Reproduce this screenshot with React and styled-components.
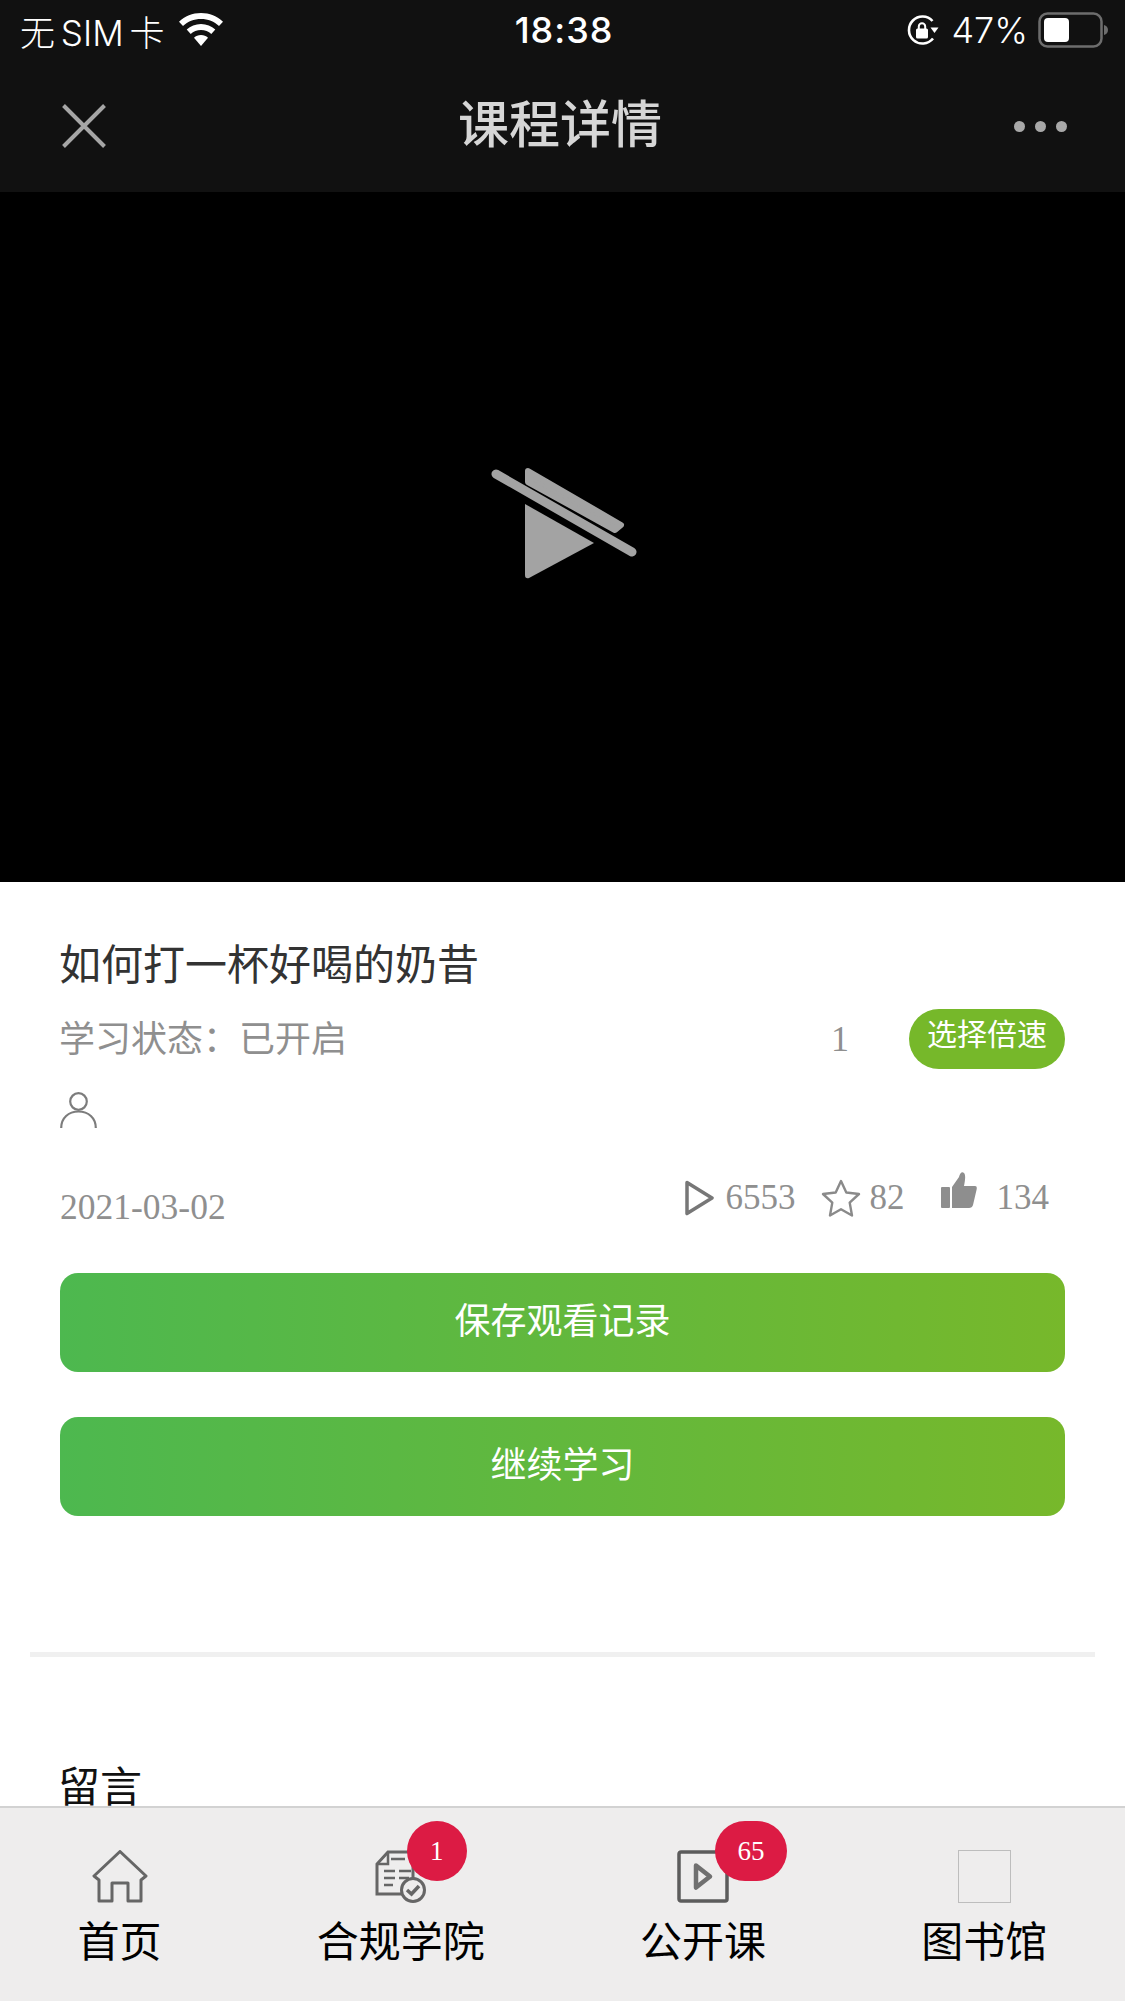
import React from 'react';
import styled, { createGlobalStyle } from 'styled-components';

const cjk = '"Noto Sans CJK SC", "Noto Sans", sans-serif';
const serif = '"Liberation Serif", "Noto Sans CJK SC", serif';

const GlobalStyle = createGlobalStyle`
  html, body {
    margin: 0;
    padding: 0;
    background: #fff;
  }
  * {
    box-sizing: border-box;
  }
`;

const Page = styled.div`
  display: flex;
  flex-direction: column;
  width: 1125px;
  height: 2001px;
  overflow: hidden;
  font-family: ${cjk};
`;

const Header = styled.header`
  flex: none;
  height: 192px;
  background: #111111;
  display: flex;
  flex-direction: column;
`;

const StatusBar = styled.div`
  height: 60px;
  padding: 0 17px 0 20px;
  display: grid;
  grid-template-columns: 1fr auto 1fr;
  align-items: center;
  color: #fff;
`;

const StatusLeft = styled.div`
  display: flex;
  align-items: center;
  gap: 13px;
  font-size: 35px;
  font-weight: 300;
  word-spacing: -4px;
  font-family: "Inter", ${cjk};
`;

const Time = styled.div`
  font-family: "Inter", sans-serif;
  font-size: 36px;
  font-weight: 500;
  letter-spacing: 1px;
`;

const StatusRight = styled.div`
  display: flex;
  align-items: center;
  justify-content: flex-end;
  gap: 10px;
  font-family: "Inter", sans-serif;
  font-size: 36px;
  font-weight: 300;
`;

const BatteryLevel = styled.span`
  margin-left: 2px;
`;

const NavBar = styled.div`
  flex: 1;
  display: flex;
  align-items: center;
  justify-content: space-between;
  padding: 0 58px 0 62px;
`;

const NavTitle = styled.div`
  font-size: 51px;
  font-weight: 500;
  color: #d6d6d6;
  line-height: 1;
  margin-bottom: 10px;
`;

const Dots = styled.div`
  display: flex;
  gap: 10px;
`;

const Dot = styled.span`
  width: 11px;
  height: 11px;
  border-radius: 50%;
  background: #a8a8a8;
`;

const VideoArea = styled.div`
  flex: none;
  height: 690px;
  background: #000;
  display: flex;
  align-items: center;
  justify-content: center;
`;

const Scroller = styled.main`
  flex: 1;
  min-height: 0;
  overflow: hidden;
  background: #fff;
`;

const Info = styled.section`
  padding: 55px 60px 0;
`;

const Title = styled.h1`
  margin: 0 0 0 -1px;
  font-size: 42px;
  font-weight: 400;
  line-height: 50px;
  color: #333;
`;

const StatusRow = styled.div`
  display: flex;
  align-items: center;
  justify-content: space-between;
  margin-top: 22px;
  height: 60px;
`;

const Muted = styled.div`
  font-size: 36px;
  color: #8f8f8f;
  line-height: 40px;
  white-space: pre;
  margin: 0 0 7px -1px;
`;

const SpeedGroup = styled.div`
  display: flex;
  align-items: center;
  gap: 60px;
`;

const SpeedValue = styled.span`
  font-family: ${serif};
  font-size: 36px;
  color: #8f8f8f;
`;

const SpeedPill = styled.button`
  width: 156px;
  height: 60px;
  border: 0;
  border-radius: 30px;
  padding: 0 0 14px;
  background: #76b82a;
  color: #fff;
  font-family: ${cjk};
  font-size: 30px;
  line-height: 1;
`;

const Author = styled.div`
  margin-top: 23px;
  height: 36px;
  display: flex;
`;

const MetaRow = styled.div`
  display: flex;
  align-items: flex-start;
  justify-content: space-between;
  margin-top: 44px;
  height: 101px;
`;

const DateText = styled.div`
  font-family: ${serif};
  font-size: 35.500px;
  line-height: 40px;
  color: #8f8f8f;
  margin-top: 15px;
`;

const Stats = styled.div`
  display: flex;
  align-items: center;
  height: 48px;
  margin: 2px 16px 0 0;
`;

const Stat = styled.div`
  display: flex;
  align-items: center;
  gap: ${p => p.$gap}px;
  margin-left: ${p => p.$left}px;
  font-family: ${serif};
  font-size: 35px;
  color: #8f8f8f;
`;

const RaisedIcon = styled.span`
  display: flex;
  margin-bottom: 16px;
`;

const ActionButton = styled.button`
  display: block;
  width: 100%;
  height: 99px;
  margin-bottom: 45px;
  border: 0;
  border-radius: 18px;
  background: linear-gradient(90deg, #4db84f 0%, #77b82b 100%);
  color: #fff;
  font-family: ${cjk};
  font-size: 36px;
  padding: 0 0 10px;
`;

const Divider = styled.hr`
  height: 5px;
  margin: 136px 30px 0;
  border: 0;
  background: #f0f0f0;
`;

const CommentTitle = styled.h2`
  margin: 102px 0 0 58px;
  font-size: 42px;
  font-weight: 400;
  line-height: 50px;
  color: #111;
`;

const TabBar = styled.nav`
  flex: none;
  height: 195px;
  background: #eeeded;
  border-top: 2px solid #d2d2d2;
  display: flex;
  justify-content: space-around;
  padding-top: 42px;
`;

const Tab = styled.div`
  display: flex;
  flex-direction: column;
  align-items: center;
`;

const TabIcon = styled.div`
  position: relative;
  height: 53px;
  display: flex;
  align-items: center;
  justify-content: center;
`;

const Badge = styled.span`
  position: absolute;
  top: -29px;
  left: ${p => p.$left}px;
  width: ${p => p.$width}px;
  height: 60px;
  border-radius: 30px;
  background: #dc1b44;
  color: #fff;
  font-family: ${serif};
  font-size: 27px;
  display: flex;
  align-items: center;
  justify-content: center;
`;

const TabLabel = styled.span`
  margin-top: 8px;
  font-size: 42px;
  line-height: 56px;
  color: #000;
`;

const BlankIcon = styled.div`
  width: 53px;
  height: 53px;
  border: 1px solid #bdbdbd;
`;

const WifiIcon = () => (
  <svg width="46" height="34" viewBox="0 0 46 34" fill="#fff">
    <path d="M23 0C14.500 0 6.800 3.300 1 8.700L5 13C9.700 8.600 16 6 23 6s13.300 2.600 18 7l4-4.300C39.200 3.300 31.500 0 23 0z" />
    <path d="M23 11c-5.500 0-10.500 2.100-14.300 5.600l4 4.300C15.400 18.500 19 17 23 17s7.600 1.500 10.300 3.900l4-4.300C33.500 13.100 28.500 11 23 11z" />
    <path d="M23 22c-2.700 0-5.200 1-7 2.700L23 33l7-8.300C28.200 23 25.700 22 23 22z" />
  </svg>
);

const RotationLockIcon = () => (
  <svg width="33" height="33" viewBox="0 0 33 33" fill="none">
    <path d="M27 24.500A13.500 13.500 0 1 1 26.500 7" stroke="#fff" strokeWidth="2.600" />
    <path d="M24.500 13.500h8L28.500 19z" fill="#fff" />
    <rect x="10" y="14.500" width="12" height="10" rx="1.500" fill="#fff" />
    <path d="M12.800 15v-2.500a3.200 3.200 0 0 1 6.400 0V15" stroke="#fff" strokeWidth="2" />
  </svg>
);

const BatteryIcon = () => (
  <svg width="70" height="36" viewBox="0 0 70 36">
    <rect x="1.500" y="1.500" width="62" height="33" rx="8" fill="none" stroke="#6d6d6d" strokeWidth="2.500" />
    <rect x="6" y="6" width="25" height="24" rx="4" fill="#fff" />
    <path d="M66 13c2.500.5 4 2.500 4 5s-1.500 4.500-4 5z" fill="#6d6d6d" />
  </svg>
);

const CloseIcon = () => (
  <svg width="44" height="44" viewBox="0 0 44 44" stroke="#a6a6a6" strokeWidth="4">
    <path d="M1.500 1.500l41 41M42.500 1.500l-41 41" />
  </svg>
);

const NoVideoIcon = () => (
  <svg width="200" height="193" viewBox="2 0 200 193" fill="#a3a3a3">
    <path d="M64 63L133 102L68 137Q64 138 64 134z" />
    <path d="M35 33L171 111" stroke="#a3a3a3" strokeWidth="9" strokeLinecap="round" />
    <path d="M67 30L160 84L154 89L67 41z" stroke="#a3a3a3" strokeWidth="6" strokeLinejoin="round" />
  </svg>
);

const PersonIcon = () => (
  <svg width="37" height="36" viewBox="0 0 37 36" fill="none" stroke="#7c7c7c" strokeWidth="2.200">
    <circle cx="18.500" cy="9.500" r="8.300" />
    <path d="M1.200 36C1.200 26 8.500 19.500 18.500 19.500S35.800 26 35.800 36" />
  </svg>
);

const PlayOutlineIcon = () => (
  <svg width="29" height="36" viewBox="0 0 29 36" fill="none" stroke="#777" strokeWidth="3.500" strokeLinejoin="round">
    <path d="M2 2.500L27 18L2 33.500z" />
  </svg>
);

const StarIcon = () => (
  <svg width="40" height="39" viewBox="0 0 40 39" fill="none" stroke="#8a8a8a" strokeWidth="2.400" strokeLinejoin="round">
    <path d="M20 2l5.300 11.500L38 15l-9.300 8.600L31 36.500 20 30.200 9 36.500l2.300-12.900L2 15l12.700-1.500z" />
  </svg>
);

const ThumbIcon = () => (
  <svg width="36" height="37" viewBox="0 0 36 37" fill="#8e8e8e">
    <rect x="0" y="15" width="9" height="21" rx="1" />
    <path d="M11 15L18 5C19 1 21-1 23 1C25 3 24 9 23 14H34C36 14 36 16 35.500 18L32 33C31.500 35 30 36 28 36H11z" />
  </svg>
);

const HomeIcon = () => (
  <svg width="56" height="53" viewBox="0 0 56 53" fill="none" stroke="#666" strokeWidth="3" strokeLinejoin="round">
    <path d="M2 26L28 1.500L54 26L49 30V51H36V33H20V51H7V30z" />
  </svg>
);

const CourseDocIcon = () => (
  <svg width="52" height="53" viewBox="0 0 52 53" fill="none" stroke="#666" strokeWidth="3">
    <path d="M38 44H2V14L13 2H38V30" />
    <path d="M13 2V14H2" strokeWidth="2.500" />
    <path d="M16 9H30M9 21H20M24 21H36M9 28H20M24 28H34M9 35H18" strokeWidth="2.500" />
    <circle cx="38" cy="40" r="11.500" fill="#eeeded" />
    <path d="M32 40l4.500 4L44 36" strokeWidth="3.500" />
  </svg>
);

const PlayBoxIcon = () => (
  <svg width="52" height="53" viewBox="0 0 52 53" fill="none" stroke="#5c5c5c" strokeWidth="3.500" strokeLinejoin="round">
    <rect x="2" y="2" width="48" height="49" rx="2" />
    <path d="M19 15.500L33 26.500L19 37.500z" strokeWidth="4.500" stroke="#707070" />
  </svg>
);

const tabs = [
  { label: '首页', icon: <HomeIcon /> },
  { label: '合规学院', icon: <CourseDocIcon />, badge: '1', badgeLeft: 32, badgeWidth: 60 },
  { label: '公开课', icon: <PlayBoxIcon />, badge: '65', badgeLeft: 38, badgeWidth: 72 },
  { label: '图书馆', icon: <BlankIcon /> },
];

export default function App() {
  return (
    <Page>
      <GlobalStyle />
      <Header>
        <StatusBar>
          <StatusLeft>
            <span>无 SIM 卡</span>
            <WifiIcon />
          </StatusLeft>
          <Time>18:38</Time>
          <StatusRight>
            <RotationLockIcon />
            <BatteryLevel>47%</BatteryLevel>
            <BatteryIcon />
          </StatusRight>
        </StatusBar>
        <NavBar>
          <CloseIcon />
          <NavTitle>课程详情</NavTitle>
          <Dots>
            <Dot />
            <Dot />
            <Dot />
          </Dots>
        </NavBar>
      </Header>
      <VideoArea>
        <NoVideoIcon />
      </VideoArea>
      <Scroller>
        <Info>
          <Title>如何打一杯好喝的奶昔</Title>
          <StatusRow>
            <Muted>学习状态：已开启</Muted>
            <SpeedGroup>
              <SpeedValue>1</SpeedValue>
              <SpeedPill>选择倍速</SpeedPill>
            </SpeedGroup>
          </StatusRow>
          <Author>
            <PersonIcon />
          </Author>
          <MetaRow>
            <DateText>2021-03-02</DateText>
            <Stats>
              <Stat $gap={12} $left={0}><PlayOutlineIcon />6553</Stat>
              <Stat $gap={9} $left={25}><StarIcon />82</Stat>
              <Stat $gap={20} $left={36}><RaisedIcon><ThumbIcon /></RaisedIcon>134</Stat>
            </Stats>
          </MetaRow>
          <ActionButton>保存观看记录</ActionButton>
          <ActionButton>继续学习</ActionButton>
        </Info>
        <Divider />
        <CommentTitle>留言</CommentTitle>
      </Scroller>
      <TabBar>
        {tabs.map(tab => (
          <Tab key={tab.label}>
            <TabIcon>
              {tab.icon}
              {tab.badge && (
                <Badge $left={tab.badgeLeft} $width={tab.badgeWidth}>{tab.badge}</Badge>
              )}
            </TabIcon>
            <TabLabel>{tab.label}</TabLabel>
          </Tab>
        ))}
      </TabBar>
    </Page>
  );
}
